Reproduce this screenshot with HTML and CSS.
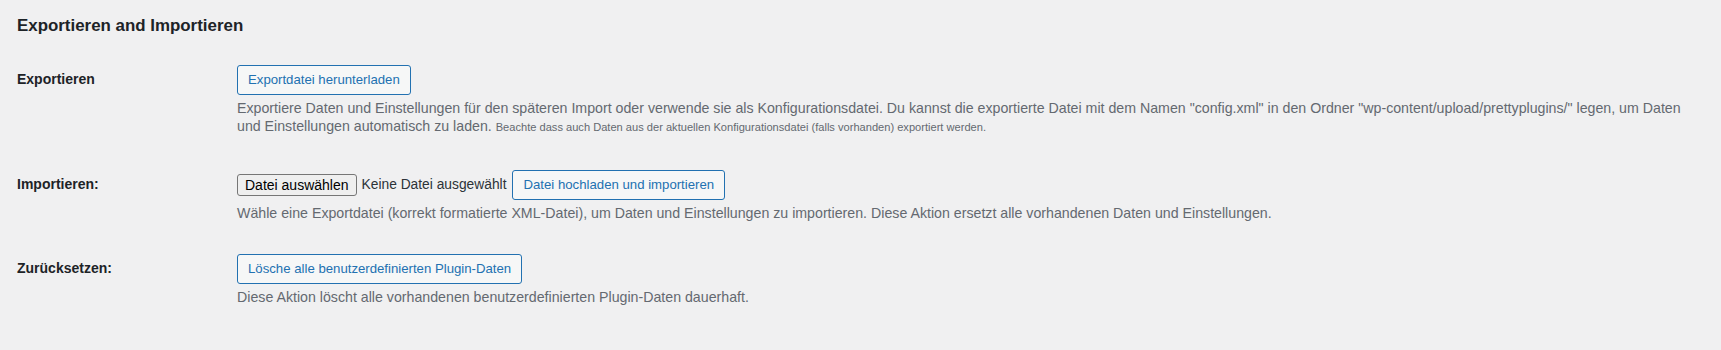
FILE: index.html
```html
<!DOCTYPE html>
<html lang="de">

<head>
    <title>Exportieren and Importieren</title>
    <link rel="stylesheet" href="styles.css">
</head>

<body>
    <div class="wrap">
        <h2 class="section-title">Exportieren and Importieren</h2>

        <table class="form-table">
            <tr class="row-export">
                <th>Exportieren</th>
                <td>
                    <button type="button" class="button">Exportdatei herunterladen</button>
                    <p class="description">Exportiere Daten und Einstellungen für den späteren Import oder verwende sie als Konfigurationsdatei. Du kannst die exportierte Datei mit dem Namen "config.xml" in den Ordner "wp-content/upload/prettyplugins/" legen, um Daten und Einstellungen automatisch zu laden. <small>Beachte dass auch Daten aus der aktuellen Konfigurationsdatei (falls vorhanden) exportiert werden.</small></p>
                </td>
            </tr>
            <tr class="row-import">
                <th>Importieren:</th>
                <td>
                    <div class="upload-line">
                        <button type="button" class="file-button">Datei auswählen</button>
                        <span class="file-name">Keine Datei ausgewählt</span>
                        <button type="button" class="button">Datei hochladen und importieren</button>
                    </div>
                    <p class="description">Wähle eine Exportdatei (korrekt formatierte XML-Datei), um Daten und Einstellungen zu importieren. Diese Aktion ersetzt alle vorhandenen Daten und Einstellungen.</p>
                </td>
            </tr>
            <tr class="row-reset">
                <th>Zurücksetzen:</th>
                <td>
                    <button type="button" class="button">Lösche alle benutzerdefinierten Plugin-Daten</button>
                    <p class="description">Diese Aktion löscht alle vorhandenen benutzerdefinierten Plugin-Daten dauerhaft.</p>
                </td>
            </tr>
        </table>
    </div>
</body>

</html>
```
FILE: styles.css
```css
body {
    margin: 0;
    background-color: #f0f0f1;
    color: #3c434a;
    font-family: "Liberation Sans", Arial, sans-serif;
    font-size: 13px;
}

.wrap {
    padding: 0 8px 0 17px;
}

.section-title {
    margin: 14px 0 13px;
    font-size: 16.9px;
    line-height: 23px;
    font-weight: 700;
    color: #1d2327;
}

.form-table {
    width: 100%;
    border-collapse: collapse;
}

.form-table th {
    width: 200px;
    padding: 20px 10px 20px 0;
    vertical-align: top;
    text-align: left;
    font-size: 14px;
    line-height: 18px;
    font-weight: 700;
    color: #1d2327;
}

.form-table td {
    padding: 15px 10px;
    vertical-align: top;
}

.button {
    display: inline-block;
    height: 30px;
    margin: 0;
    padding: 0 10px;
    border: 1px solid #2271b1;
    border-radius: 3px;
    background-color: #f6f7f7;
    color: #2271b1;
    font-family: "Liberation Sans", Arial, sans-serif;
    font-size: 13.2px;
    line-height: 28px;
    vertical-align: top;
    cursor: pointer;
}

.button:hover {
    background-color: #f0f0f1;
    border-color: #0a4b78;
    color: #0a4b78;
}

.description {
    margin: 4px 0 0;
    color: #646970;
    font-size: 14.2px;
    line-height: 18.4px;
}

.description small {
    font-size: 11.1px;
    line-height: 1;
}

.row-export .description {
    margin-bottom: 4px;
}

.row-import .description {
    margin-bottom: 2px;
}

.upload-line {
    display: flex;
    align-items: center;
}

.file-button {
    height: 22px;
    margin: 0 5px 0 0;
    padding: 0 7px;
    border: 1px solid #767676;
    border-radius: 3px;
    background-color: #efefef;
    color: #000;
    font-family: "Liberation Sans", Arial, sans-serif;
    font-size: 14px;
    cursor: pointer;
}

.file-name {
    margin-right: 6px;
    color: #2c3338;
    font-size: 13.8px;
}
```
